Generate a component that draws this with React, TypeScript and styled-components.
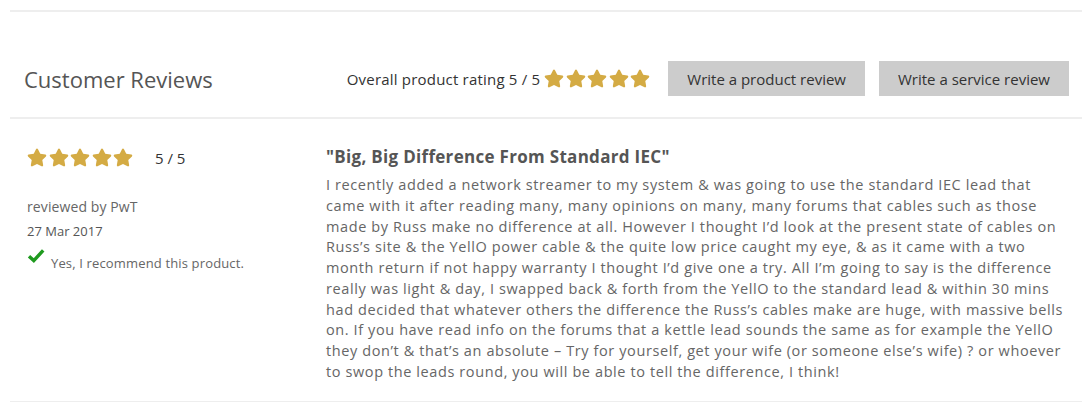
import styled, { createGlobalStyle } from 'styled-components';
import { FaStar } from 'react-icons/fa';

const GlobalStyle = createGlobalStyle`
  body {
    margin: 0;
    background: #fff;
    font-family: 'Open Sans', 'Liberation Sans', sans-serif;
  }
`;

const reviewText =
  'I recently added a network streamer to my system & was going to use the standard IEC lead that came with it after reading many, many opinions on many, many forums that cables such as those made by Russ make no difference at all. However I thought I’d look at the present state of cables on Russ’s site & the YellO power cable & the quite low price caught my eye, & as it came with a two month return if not happy warranty I thought I’d give one a try. All I’m going to say is the difference really was light & day, I swapped back & forth from the YellO to the standard lead & within 30 mins had decided that whatever others the difference the Russ’s cables make are huge, with massive bells on. If you have read info on the forums that a kettle lead sounds the same as for example the YellO they don’t & that’s an absolute – Try for yourself, get your wife (or someone else’s wife) ? or whoever to swop the leads round, you will be able to tell the difference, I think!';

const Stars = ({ count }: { count: number }) => (
  <StarList>
    {Array.from({ length: count }).map((_, i) => (
      <FaStar key={i} />
    ))}
  </StarList>
);

const CheckIcon = () => (
  <svg viewBox="0 0 18 15" width="18" height="15">
    <path d="M2 8.2 L6.8 12.6 L16.2 2.4" fill="none" stroke="#1f9a1f" strokeWidth="3.4" />
  </svg>
);

export default function App() {
  return (
    <Wrapper>
      <GlobalStyle />
      <Header>
        <Heading>Customer Reviews</Heading>
        <Actions>
          <Overall>Overall product rating 5 / 5</Overall>
          <Stars count={5} />
          <Buttons>
            <Button>Write a product review</Button>
            <Button>Write a service review</Button>
          </Buttons>
        </Actions>
      </Header>
      <Review>
        <Meta>
          <RatingRow>
            <Stars count={5} />
            <Score>5 / 5</Score>
          </RatingRow>
          <Author>reviewed by PwT</Author>
          <Date>27 Mar 2017</Date>
          <Recommend>
            <CheckIcon />
            <span>Yes, I recommend this product.</span>
          </Recommend>
        </Meta>
        <Body>
          <Title>"Big, Big Difference From Standard IEC"</Title>
          <Text>{reviewText}</Text>
        </Body>
      </Review>
    </Wrapper>
  );
}

const Wrapper = styled.div`
  width: 1072px;
  margin: 10px 0 0 10px;
  border-top: 2px solid #eee;
`;

const Header = styled.div`
  display: flex;
  align-items: center;
  justify-content: space-between;
  padding: 49px 13px 21px 14px;
  border-bottom: 2px solid #eee;
`;

const Heading = styled.h2`
  margin: 0;
  font-size: 22px;
  font-weight: 400;
  color: #555;
`;

const Actions = styled.div`
  display: flex;
  align-items: center;
`;

const Overall = styled.span`
  font-size: 15px;
  letter-spacing: 0.2px;
  color: #333;
  margin-right: 4px;
`;

const StarList = styled.span`
  display: inline-flex;
  gap: 1.5px;
  color: #d4ab44;

  svg {
    width: 20px;
    height: 19px;
  }
`;

const Buttons = styled.div`
  display: flex;
  gap: 14px;
  margin-left: 18px;
`;

const Button = styled.button`
  height: 35px;
  padding: 0 19px;
  border: none;
  background: #ccc;
  color: #333;
  font-family: inherit;
  font-size: 15px;
  cursor: pointer;
`;

const Review = styled.div`
  display: grid;
  grid-template-columns: 299px 740px;
  padding: 26px 0 18px 17px;
  border-bottom: 1px solid #eee;
`;

const Meta = styled.div`
  display: flex;
  flex-direction: column;
  align-items: flex-start;
`;

const RatingRow = styled.div`
  display: flex;
  align-items: center;
  margin-top: 3px;
  height: 19px;
`;

const Score = styled.span`
  margin-left: 22px;
  font-size: 15px;
  color: #333;
`;

const Author = styled.div`
  margin-top: 30px;
  font-size: 14px;
  letter-spacing: 0.1px;
  color: #666;
`;

const Date = styled.div`
  margin-top: 6px;
  font-size: 13px;
  color: #555;
`;

const Recommend = styled.div`
  display: flex;
  align-items: flex-start;
  gap: 6px;
  margin-top: 8px;
  font-size: 13px;
  letter-spacing: 0.15px;
  color: #666;

  span {
    margin-top: 6px;
  }
`;

const Body = styled.div`
  display: flex;
  flex-direction: column;
`;

const Title = styled.h3`
  margin: 0 0 7px;
  font-size: 17px;
  font-weight: 700;
  letter-spacing: 0.3px;
  color: #555;
`;

const Text = styled.p`
  margin: 0;
  font-size: 14.5px;
  letter-spacing: 0.6px;
  line-height: 20.75px;
  color: #666;
`;
